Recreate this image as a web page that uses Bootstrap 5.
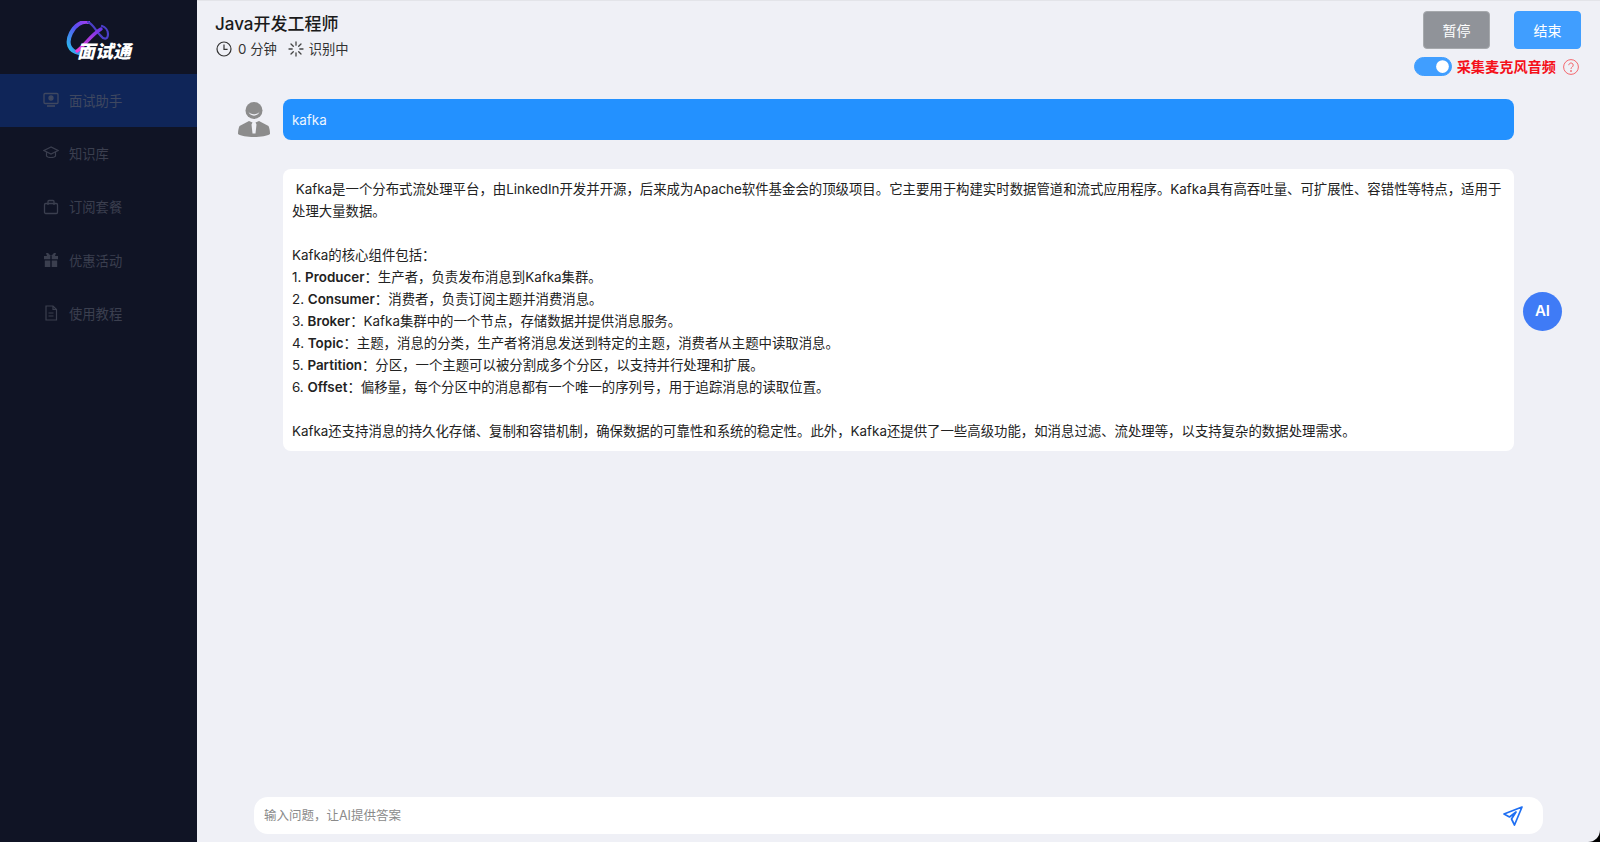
<!DOCTYPE html>
<html lang="zh">
<head>
<meta charset="utf-8">
<title>面试通</title>
<link href="https://cdn.jsdelivr.net/npm/bootstrap@5.3.0/dist/css/bootstrap.min.css" rel="stylesheet">
<style>
html,body{height:100%;}
body{background:#000;font-family:Inter,"Noto Sans CJK SC",sans-serif;font-size:13.4px;color:#222;overflow:hidden;}
.shell{height:842px;}
.side{width:197px;background:#101425;flex:none;}
.logo-box{height:74px;padding-top:7px;}
.logo-wrap{width:67px;height:40px;}
.logo-wrap svg{display:block;}
.logo-word{position:absolute;left:12px;top:20px;font:italic 800 18px/18px "Noto Sans CJK SC",sans-serif;color:#fff;white-space:nowrap;}
.side .nav-link{height:53.3px;padding:2px 0 0 43px;color:#3b3f4f;font-size:13.3px;display:flex;align-items:center;gap:10px;}
.side .nav-link svg{width:16px;height:16px;flex:none;margin-top:-3px;}
.side .nav-link.active{background:#0f2558;color:#3f4860;}
.stage{background:#eff0f6;border-bottom-right-radius:12px;border-top:1px solid #e3e4e9;min-width:0;}
.topbar{height:98px;padding:9px 19px 0 18px;flex:none;}
.job{font-size:17px;font-weight:500;line-height:28px;color:#1a1a1a;margin-bottom:0;}
.meta{margin-top:0;line-height:22px;color:#333;font-size:13.3px;}
.meta svg{width:16px;height:16px;}
.meta-clock{margin-left:1px;margin-right:6px;}
.meta-spin{margin-left:11px;margin-right:5px;}
.controls{margin-top:1px;}
.act{width:67px;height:38px;padding:0;font-size:14px;border-radius:4px;color:#fff;}
.act-grey{background:#909399;border:1px solid #a6a9ad;}
.act-blue{background:#409eff;border:1px solid #409eff;margin-left:24px;}
.act-grey:hover{background:#909399;color:#fff;}
.act-blue:hover{background:#409eff;color:#fff;}
.mic{margin-top:8px;padding-right:2px;}
.mic .form-switch{padding:0;margin:0;min-height:0;height:19px;}
.mic .form-check-input{width:38px;height:19px;margin:0;background-color:#409eff;border-color:#409eff;float:none;display:block;}
.mic-label{color:#f5101a;font-weight:700;font-size:14.2px;line-height:19px;margin-left:5px;margin-right:7px;}
.chat{flex:1 1 auto;min-height:0;}
.turn{display:flex;}
.who{width:32px;margin-left:41px;margin-right:13px;flex:none;}
.who svg{display:block;width:32px;height:35px;margin-top:3px;}
.bubble{width:1231px;flex:none;border-radius:8px;padding:9px 9px;line-height:22px;font-size:13.4px;}
.bubble-q{background:#2391ff;color:#eef6ff;height:41px;padding-top:10px;}
.bubble-a{background:#fff;color:#222;margin-left:86px;margin-top:29px;height:282px;}
.bubble-a b{font-weight:600;}
.ai-dot{width:39px;height:39px;border-radius:50%;background:#3f7bf6;color:#fff;font-weight:600;font-size:15px;margin-left:9px;margin-top:31px;flex:none;}
.ask-wrap{padding:0 57px 8px 57px;flex:none;}
.ask{height:37px;background:#fff;border-radius:14px;padding:0 20px 0 10px;}
.ask .form-control{border:0;background:transparent;box-shadow:none;padding:2px 0 0;font-size:12.5px;color:#333;}
.ask .form-control::placeholder{color:#8a8a8a;opacity:1;}
.ask svg{width:20px;height:20px;flex:none;}
</style>
</head>
<body>
<div class="shell d-flex">
  <aside class="side d-flex flex-column">
    <div class="logo-box d-flex align-items-center justify-content-center">
      <div class="logo-wrap position-relative">
        <svg width="62" height="38" viewBox="0 0 62 38" fill="none">
          <defs>
            <linearGradient id="lgA" x1="0" y1="1" x2="1" y2="0"><stop offset="0" stop-color="#27c4ee"/><stop offset=".6" stop-color="#5a4df0"/><stop offset="1" stop-color="#a63df0"/></linearGradient>
            <linearGradient id="lgB" x1="0" y1="1" x2="1" y2="0"><stop offset="0" stop-color="#f03fd8"/><stop offset="1" stop-color="#6a35e8"/></linearGradient>
          </defs>
          <path d="M14 32C4 30 1 22 6 12 10 4 17 0 23 1" stroke="url(#lgA)" stroke-width="4" stroke-linecap="round"/>
          <path d="M23 1C28 3 31 10 35 14 38 18 43 20 43 13 43 9 40 6 37 5" stroke="#4a3fc8" stroke-width="2.2" stroke-linecap="round"/>
          <path d="M12 30C20 24 26 14 36 8" stroke="url(#lgB)" stroke-width="3.4" stroke-linecap="round"/>
        </svg>
        <span class="logo-word">面试通</span>
      </div>
    </div>
    <nav class="nav flex-column">
      <a class="nav-link active" href="#">
        <svg viewBox="0 0 16 16" fill="none" stroke="currentColor" stroke-width="1.3"><rect x="1" y="1.5" width="14" height="10" rx="1"/><circle cx="8" cy="6" r="2" fill="currentColor"/><path d="M4 14h8" stroke-width="1.6"/></svg>面试助手</a>
      <a class="nav-link" href="#">
        <svg viewBox="0 0 16 16" fill="none" stroke="currentColor" stroke-width="1.2"><path d="M8 2 1 5.500 8 9l7-3.500z"/><path d="M3.500 7v4c1 2 8 2 9 0V7"/></svg>知识库</a>
      <a class="nav-link" href="#">
        <svg viewBox="0 0 16 16" fill="none" stroke="currentColor" stroke-width="1.3"><rect x="1.500" y="4.500" width="13" height="10" rx="1.200"/><path d="M5 6V2.500a1 1 0 0 1 1-1h4a1 1 0 0 1 1 1V6"/></svg>订阅套餐</a>
      <a class="nav-link" href="#">
        <svg viewBox="0 0 16 16" fill="currentColor"><path d="M1 4h6.300v3.200H1zM8.700 4H15v3.200H8.700zM1.800 8.400h5.500V15H1.800zM8.700 8.400h5.500V15H8.700z"/><path d="M8 4 5 1h-2l1 3zM8 4l3-3h2l-1 3z"/></svg>优惠活动</a>
      <a class="nav-link" href="#">
        <svg viewBox="0 0 16 16" fill="none" stroke="currentColor" stroke-width="1.2"><path d="M3 1h7l3.500 3.500V15H3z"/><path d="M10 1v3.500h3.500M5.500 8h5M5.500 11h5"/></svg>使用教程</a>
    </nav>
  </aside>

  <main class="stage flex-grow-1 d-flex flex-column">
    <header class="topbar d-flex justify-content-between align-items-start">
      <div>
        <h1 class="job">Java开发工程师</h1>
        <div class="meta d-flex align-items-center">
          <svg class="meta-clock" viewBox="0 0 16 16" fill="none" stroke="#333" stroke-width="1.2"><circle cx="8" cy="8" r="7"/><path d="M8 3.600V8.400h3.600"/></svg>
          <span>0 分钟</span>
          <svg class="meta-spin" viewBox="0 0 16 16" fill="none" stroke="#444" stroke-width="1.300" stroke-linecap="round"><path d="M8 1v3.200M8 11.800V15M1 8h3.200M11.800 8H15M3 3l2.300 2.300M10.700 10.700 13 13M13 3l-2.300 2.300M5.300 10.700 3 13"/></svg>
          <span>识别中</span>
        </div>
      </div>
      <div class="controls d-flex flex-column align-items-end">
        <div class="d-flex">
          <button type="button" class="btn act act-grey">暂停</button>
          <button type="button" class="btn act act-blue">结束</button>
        </div>
        <div class="mic d-flex align-items-center">
          <div class="form-check form-switch"><input class="form-check-input" type="checkbox" role="switch" checked aria-label="采集麦克风音频"></div>
          <span class="mic-label">采集麦克风音频</span>
          <svg width="16" height="16" viewBox="0 0 16 16" fill="none" stroke="#f4686e" stroke-width="1"><circle cx="8" cy="8" r="7.400"/><path d="M5.800 6.200a2.200 2.200 0 1 1 3.400 1.800c-.8.500-1.200 1-1.200 1.900"/><circle cx="8" cy="12" r=".5" fill="#f4686e"/></svg>
        </div>
      </div>
    </header>

    <section class="chat">
      <div class="turn">
        <div class="who">
          <svg viewBox="0 0 32 35" fill="#8c8c8c"><circle cx="16" cy="8.500" r="8.500"/><path d="M10.500 9.500c1.500 3.500 9.500 3.500 11 0-1 5.500-10 5.500-11 0z" fill="#eff0f6"/><path d="M11 19 1.500 24C.5 26 0 29 0 32c5 4 27 4 32 0 0-3-.5-6-1.500-8L21 19l-3.500 1.500 1 2-1 9h-3l-1-9 1-2z"/></svg>
        </div>
        <div class="bubble bubble-q">kafka</div>
      </div>
      <div class="turn align-items-center">
        <div class="bubble bubble-a">
          &nbsp;Kafka是一个分布式流处理平台，由LinkedIn开发并开源，后来成为Apache软件基金会的顶级项目。它主要用于构建实时数据管道和流式应用程序。Kafka具有高吞吐量、可扩展性、容错性等特点，适用于处理大量数据。<br><br>
          Kafka的核心组件包括：<br>
          1. <b>Producer</b>：生产者，负责发布消息到Kafka集群。<br>
          2. <b>Consumer</b>：消费者，负责订阅主题并消费消息。<br>
          3. <b>Broker</b>：Kafka集群中的一个节点，存储数据并提供消息服务。<br>
          4. <b>Topic</b>：主题，消息的分类，生产者将消息发送到特定的主题，消费者从主题中读取消息。<br>
          5. <b>Partition</b>：分区，一个主题可以被分割成多个分区，以支持并行处理和扩展。<br>
          6. <b>Offset</b>：偏移量，每个分区中的消息都有一个唯一的序列号，用于追踪消息的读取位置。<br><br>
          Kafka还支持消息的持久化存储、复制和容错机制，确保数据的可靠性和系统的稳定性。此外，Kafka还提供了一些高级功能，如消息过滤、流处理等，以支持复杂的数据处理需求。
        </div>
        <div class="ai-dot d-flex align-items-center justify-content-center">AI</div>
      </div>
    </section>

    <footer class="ask-wrap">
      <div class="ask d-flex align-items-center">
        <input class="form-control" type="text" placeholder="输入问题，让AI提供答案" aria-label="输入问题">
        <svg viewBox="0 0 20 20" fill="none" stroke="#1f6ff2" stroke-width="1.700" stroke-linejoin="round"><path d="M19 1 1 8l5.500 3L13 6l-4.500 7 3 6z"/></svg>
      </div>
    </footer>
  </main>
</div>
<script src="https://cdn.jsdelivr.net/npm/bootstrap@5.3.0/dist/js/bootstrap.bundle.min.js"></script>
</body>
</html>
